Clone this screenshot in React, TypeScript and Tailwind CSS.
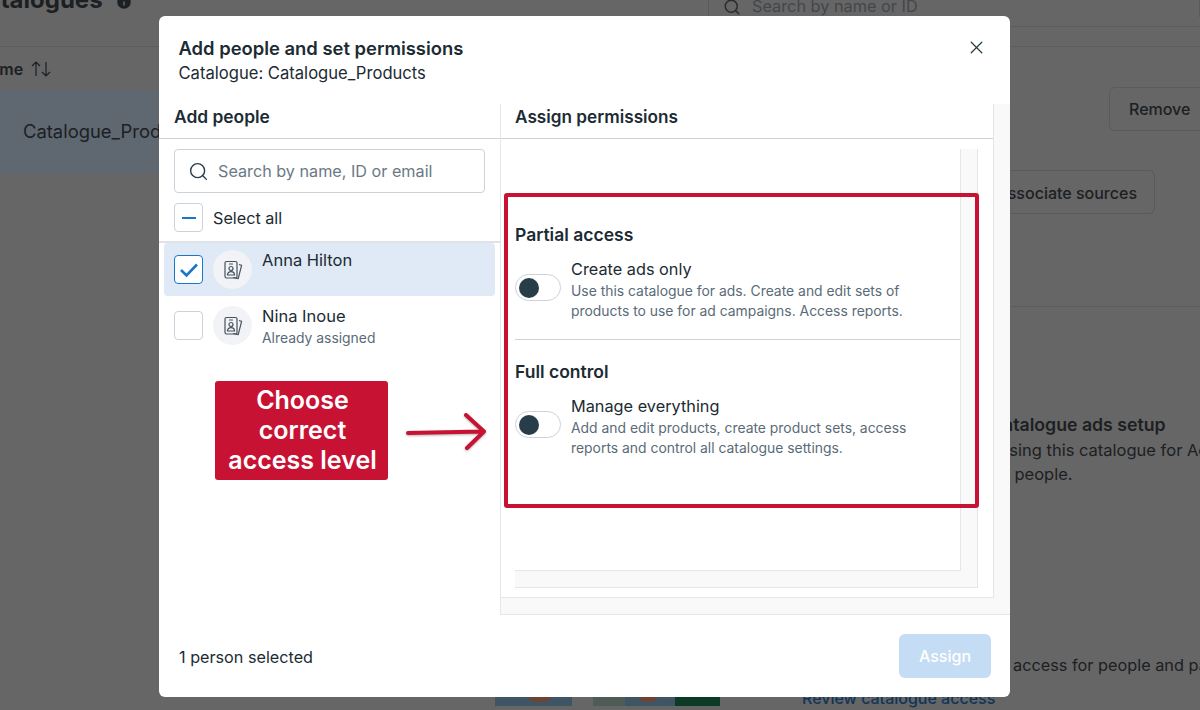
import { Info, Search, X } from "lucide-react";

function IdCards() {
  return (
    <svg width="22" height="22" viewBox="0 0 22 22" fill="none" stroke="#46525c" strokeWidth="1.2">
      <rect x="3" y="2.5" width="12" height="16.5" rx="1.5" />
      <path d="M7.5 5h3" strokeLinecap="round" />
      <circle cx="9" cy="9.5" r="2" />
      <path d="M5.5 16c0-2.2 1.5-3.4 3.5-3.4s3.5 1.2 3.5 3.4z" />
      <path d="M17 5.5l2.6.8-3.4 13.4-5-1.2" strokeLinejoin="round" />
    </svg>
  );
}

function Toggle() {
  return (
    <span className="flex h-[27px] w-[46px] shrink-0 items-center rounded-full border border-[#cbd2d9] bg-white pl-[3px]">
      <span className="size-5 rounded-full bg-[#283c4a]" />
    </span>
  );
}

function Permission(props: { title: string; name: string; lines: string[] }) {
  return (
    <div>
      <h3 className="text-[17.5px] leading-5 font-semibold text-[#1c2b33]">{props.title}</h3>
      <div className="mt-[14px] flex gap-[10px]">
        <div className="pt-[15px]">
          <Toggle />
        </div>
        <div>
          <p className="text-[16.3px] leading-5 text-[#1c2b33]">{props.name}</p>
          <div className="mt-[2px]">
            {props.lines.map((line) => (
              <p key={line} className="text-[13.9px] leading-5 text-[#5a6b78]">
                {line}
              </p>
            ))}
          </div>
        </div>
      </div>
    </div>
  );
}

function Person(props: { name: string; note?: string; selected?: boolean }) {
  return (
    <div className={`flex h-[53px] gap-[10px] rounded-[4px] pl-[10px] ${props.selected ? "bg-[#dfeaf6]" : ""}`}>
      <div
        className={`mt-3 flex size-[29px] items-center justify-center rounded-[4px] border bg-white ${
          props.selected ? "border-[#1877c9]" : "border-[#cbd2d9]"
        }`}
      >
        {props.selected && (
          <svg width="20" height="16" viewBox="0 0 20 16" fill="none" stroke="#1877c9" strokeWidth="2.6">
            <path d="M2 8l5.5 5.5L18 2.5" />
          </svg>
        )}
      </div>
      <div className="mt-[7px] flex size-[39px] items-center justify-center rounded-full bg-[#f1f3f6]">
        <IdCards />
      </div>
      <div>
        <p className="mt-[7px] text-[16.5px] leading-5 text-[#1c2b33]">{props.name}</p>
        {props.note && <p className="mt-[3px] text-[13.9px] leading-[18px] text-[#5a6b78]">{props.note}</p>}
      </div>
    </div>
  );
}

function Background() {
  return (
    <div className="flex h-full flex-col bg-[#666666] text-[#1c2023]">
      <div className="flex h-[47px] shrink-0 justify-between border-b border-[#5c5c5c]">
        <div className="ml-[-31px] flex h-[15px] items-end gap-3">
          <span className="text-[24px] leading-[30px] font-bold">Catalogues</span>
          <Info size={18} className="mb-1 fill-[#1c2023] text-[#666666]" />
        </div>
        <div className="h-[27px] w-[492px] border-b border-[#5c5c5c]">
          <div className="flex h-[17px] items-end gap-[11px] border-x border-[#585c60] pl-[14px]">
            <Search size={18} className="mb-[1px] text-[#2a2d30]" />
            <span className="mb-[1px] text-[16.3px] leading-5 text-[#43474b]">Search by name or ID</span>
          </div>
        </div>
      </div>
      <div className="flex min-h-0 flex-1">
        <div className="w-[445px] shrink-0">
          <div className="ml-[-22px] flex h-[43px] items-center gap-[8px] text-[16px] font-semibold">
            Name
            <svg width="20" height="18" viewBox="0 0 20 18" fill="none" stroke="#1c2023" strokeWidth="1.2">
              <path d="M5 16V2M1 6l4-4 4 4M15 2v14M11 12l4 4 4-4" />
            </svg>
          </div>
          <div className="flex h-[83px] items-center bg-[#5f6771] pl-[23px] text-[18.4px]">Catalogue_Products</div>
        </div>
        <div className="flex min-w-0 flex-1 flex-col overflow-hidden whitespace-nowrap">
          <div className="h-[260px] border-b border-[#5c5c5c] pt-[40px]">
            <div className="flex flex-col items-end gap-[39px]">
              <div className="mr-[-40px] flex h-[44px] w-[131px] items-center rounded-[6px] border border-[#545b62] pl-[19px] text-[16px] font-medium">
                Remove
              </div>
              <div className="mr-[45px] flex h-[44px] w-[300px] items-center justify-end rounded-[6px] border border-[#545b62] pt-[1px] pr-[17px] text-[16px] font-medium">
                Disassociate sources
              </div>
            </div>
          </div>
          <div className="ml-[545px] pt-[107px]">
            <p className="text-[17.7px] leading-[22px] font-semibold">Catalogue ads setup</p>
          </div>
          <p className="mt-[2px] ml-[552px] text-[16.5px] leading-6">Using this catalogue for Ads</p>
          <p className="ml-[535px] text-[16.5px] leading-6">that people.</p>
          <p className="mt-[167px] ml-[568px] text-[16.3px] leading-6">access for people and partners</p>
          <div className="mt-[11px] flex h-[20px]">
            <div className="relative ml-[50px] h-[18px] w-[77px] overflow-hidden bg-[#3f5563]">
              <span className="absolute top-[2px] left-[34px] h-[12px] w-[22px] rounded-full bg-[#6b4436]" />
            </div>
            <div className="ml-[21px] h-[18px] w-[32px] bg-[#4f5c55]" />
            <div className="relative h-[18px] w-[50px] overflow-hidden bg-[#3f5563]">
              <span className="absolute top-[2px] left-[14px] h-[12px] w-[18px] rounded-full bg-[#6b4436]" />
            </div>
            <div className="h-[18px] w-[45px] bg-[#0c3a25]" />
            <span className="ml-[82px] text-[16px] leading-5 font-medium text-[#0f3557]">Review catalogue access</span>
          </div>
        </div>
      </div>
    </div>
  );
}

function Dialog() {
  return (
    <div className="absolute top-4 left-[159px] flex h-[681px] w-[851px] flex-col rounded-[6px] bg-white text-[#1c2b33]">
      <div className="relative h-[88px] shrink-0 pt-[20px] pl-[19.5px]">
        <h2 className="text-[18.4px] leading-6 font-semibold">Add people and set permissions</h2>
        <p className="mt-[2px] text-[16.6px] leading-[22px]">Catalogue: Catalogue_Products</p>
        <X size={21} strokeWidth={1.5} className="absolute top-[21px] right-[23px] text-[#283c4a]" />
      </div>

      <div className="flex h-[511px] shrink-0">
        <div className="w-[341px] shrink-0 bg-white">
          <div className="flex h-[35px] items-start border-b border-[#cbd2d9] pl-[15px]">
            <h3 className="text-[17.4px] leading-[26px] font-semibold">Add people</h3>
          </div>
          <div className="px-[15px] pt-[10px]">
            <div className="flex h-[44px] items-center gap-[9px] rounded-[4px] border border-[#cbd2d9] pl-[13px]">
              <Search size={21} strokeWidth={1.6} className="text-[#283c4a]" />
              <span className="text-[16.2px] text-[#6b7985]">Search by name, ID or email</span>
            </div>
            <div className="mt-[10px] flex items-center gap-[10px]">
              <div className="flex size-[29px] items-center justify-center rounded-[4px] border border-[#cbd2d9]">
                <span className="h-[2px] w-[14px] bg-[#1877c9]" />
              </div>
              <span className="mt-[1px] text-[16.2px] text-[#1c2b33]">Select all</span>
            </div>
          </div>
          <div className="mt-[9px] border-t-2 border-[#dfe3e8] px-[5px]">
            <Person name="Anna Hilton" selected />
            <div className="h-[3px]" />
            <Person name="Nina Inoue" note="Already assigned" />
          </div>
        </div>

        <div className="flex-1 border-b border-l border-[#e4e7ea] bg-[#f9f9fa]">
          <div className="flex h-[494px] w-[493px] flex-col border-r border-b border-[#e4e7ea] bg-white">
            <div className="h-[35px] shrink-0 border-b border-[#cbd2d9] pl-[14px]">
              <h3 className="text-[17.2px] leading-[26px] font-semibold">Assign permissions</h3>
            </div>
            <div className="min-h-0 flex-1 pt-[10px] pl-[14px]">
              <div className="h-[439px] w-[463px] border-r border-b border-[#e4e7ea] bg-[#f9f9fa]">
                <div className="h-[422px] w-[446px] border-r border-b border-[#e4e7ea] bg-white pt-[76px]">
                  <Permission
                    title="Partial access"
                    name="Create ads only"
                    lines={[
                      "Use this catalogue for ads. Create and edit sets of",
                      "products to use for ad campaigns. Access reports.",
                    ]}
                  />
                  <div className="mt-[18px] mb-[22px] border-t border-[#cbd2d9]" />
                  <Permission
                    title="Full control"
                    name="Manage everything"
                    lines={[
                      "Add and edit products, create product sets, access",
                      "reports and control all catalogue settings.",
                    ]}
                  />
                </div>
              </div>
            </div>
          </div>
        </div>
      </div>

      <div className="flex flex-1 items-center justify-between pr-[19px] pl-5">
        <span className="mt-[2px] text-[16.2px]">1 person selected</span>
        <span className="flex h-[44px] w-[92px] items-center justify-center rounded-[6px] bg-[#c4dcf4] text-[16px] font-medium text-white">
          Assign
        </span>
      </div>
    </div>
  );
}

export default function App() {
  return (
    <div className="relative h-[710px] w-[1200px] overflow-hidden font-['Inter',sans-serif]">
      <Background />
      <Dialog />

      {/* annotations drawn over the dialog */}
      <div className="absolute top-[193px] left-[504px] h-[315px] w-[475px] rounded-[3px] border-[4px] border-[#c81233]" />
      <div className="absolute top-[381px] left-[215px] flex h-[99px] w-[173px] items-center justify-center rounded-[3px] bg-[#c81233] pb-[2px] pl-[2px] text-center text-[25px] leading-[30px] font-semibold text-white">
        Choose
        <br />
        correct
        <br />
        access level
      </div>
      <svg
        className="absolute top-[410px] left-[405px] drop-shadow-[0_1px_1px_rgba(0,0,0,0.3)]"
        width="84"
        height="42"
        viewBox="0 0 84 42"
        fill="none"
        stroke="#c81233"
        strokeWidth="4"
        strokeLinecap="round"
        strokeLinejoin="round"
      >
        <path d="M3 23L78 21.5M61 5l18 16.5L62 38" />
      </svg>
    </div>
  );
}
